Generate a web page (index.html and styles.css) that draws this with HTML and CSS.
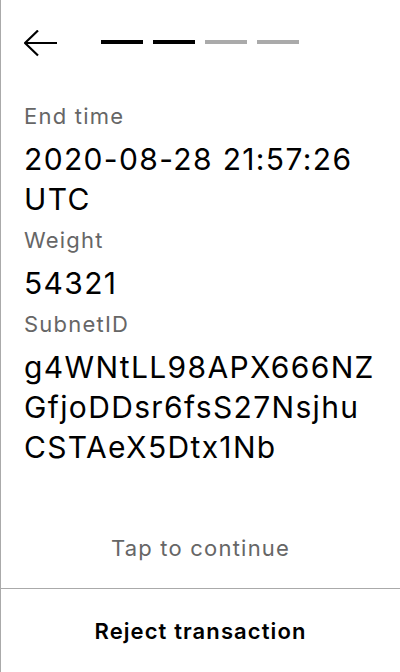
FILE: index.html
```html
<!DOCTYPE html>
<html>
<head>
<meta charset="utf-8">
<link rel="stylesheet" href="styles.css">
</head>
<body>
<div class="screen">
  <div class="top">
    <svg class="back" width="34" height="28" viewBox="0 0 34 28">
      <path d="M1 13 H33 M14 0.5 L1 13 L14 25.5" fill="none" stroke="#000" stroke-width="2.2"/>
    </svg>
    <div class="steps">
      <span class="step on"></span>
      <span class="step on"></span>
      <span class="step"></span>
      <span class="step"></span>
    </div>
  </div>
  <div class="content">
    <div class="field">
      <div class="label">End time</div>
      <div class="value">2020-08-28 21:57:26 UTC</div>
    </div>
    <div class="field">
      <div class="label">Weight</div>
      <div class="value">54321</div>
    </div>
    <div class="field">
      <div class="label">SubnetID</div>
      <div class="value">g4WNtLL98APX666NZ<br>GfjoDDsr6fsS27Nsjhu<br>CSTAeX5Dtx1Nb</div>
    </div>
  </div>
  <div class="tap">Tap to continue</div>
  <div class="footer">Reject transaction</div>
</div>
</body>
</html>
```
FILE: styles.css
```css
html, body {
  margin: 0;
  padding: 0;
  background: #fff;
}
body {
  font-family: Inter, "Noto Sans", sans-serif;
  color: #000;
}
.screen {
  width: 399px;
  height: 672px;
  border-left: 1px solid #aaa;
  display: flex;
  flex-direction: column;
}
.top {
  display: flex;
  align-items: center;
  padding: 30px 0 0 23px;
  height: 28px;
}
.back {
  display: block;
}
.steps {
  display: flex;
  gap: 10px;
  margin-left: 43px;
  margin-top: -4px;
}
.step {
  width: 42px;
  height: 4px;
  background: #aaa;
}
.step.on {
  background: #000;
}
.content {
  padding: 42px 20px 0 23px;
  flex: 1;
  display: flex;
  flex-direction: column;
  gap: 5px;
}
.field {
  display: flex;
  flex-direction: column;
  gap: 7px;
}
.label {
  font-size: 22px;
  line-height: 32px;
  letter-spacing: 0.055em;
  color: #666;
}
.value {
  font-size: 30px;
  line-height: 40px;
  letter-spacing: 0.045em;
}
.tap {
  text-align: center;
  font-size: 22px;
  letter-spacing: 0.055em;
  color: #666;
  line-height: 28px;
  padding-bottom: 26px;
}
.footer {
  border-top: 1px solid #aaa;
  height: 83px;
  display: flex;
  align-items: center;
  justify-content: center;
  font-size: 22px;
  font-weight: 600;
  letter-spacing: 0.05em;
}
```
